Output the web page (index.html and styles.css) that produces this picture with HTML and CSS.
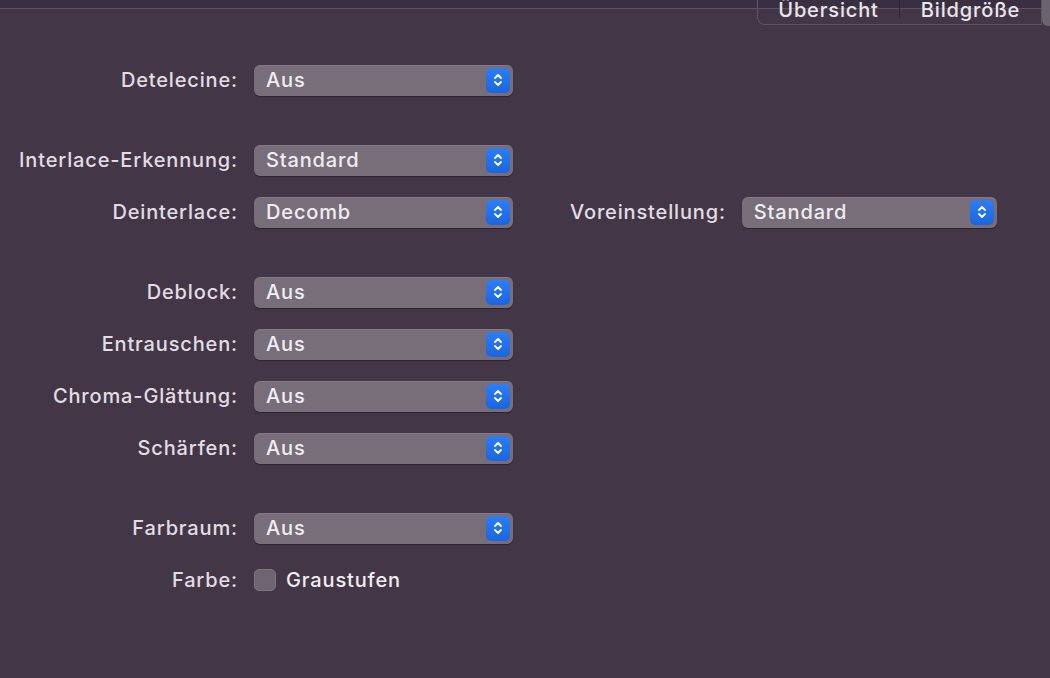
FILE: index.html
```html
<!DOCTYPE html>
<html lang="de">
<head>
    <meta charset="UTF-8">
    <title>Filter</title>
    <link rel="stylesheet" href="styles.css">
</head>
<body>
    <div class="topstrip"></div>
    <div class="tabbar">
        <div class="tabs">
            <span class="tab">Übersicht</span>
            <span class="tab-sep"></span>
            <span class="tab">Bildgröße</span>
        </div>
        <div class="tab-selected"></div>
    </div>

    <div class="form">
        <div class="group">
            <div class="row">
                <label class="lbl">Detelecine:</label>
                <div class="popup"><span>Aus</span><span class="arrows"><svg viewBox="0 0 10 14" width="10" height="14"><path d="M2 5 L5 2 L8 5 M2 9 L5 12 L8 9" fill="none" stroke="#fff" stroke-width="1.8" stroke-linecap="round" stroke-linejoin="round"/></svg></span></div>
            </div>
        </div>

        <div class="group">
            <div class="row">
                <label class="lbl">Interlace-Erkennung:</label>
                <div class="popup"><span>Standard</span><span class="arrows"><svg viewBox="0 0 10 14" width="10" height="14"><path d="M2 5 L5 2 L8 5 M2 9 L5 12 L8 9" fill="none" stroke="#fff" stroke-width="1.8" stroke-linecap="round" stroke-linejoin="round"/></svg></span></div>
            </div>
            <div class="row">
                <label class="lbl">Deinterlace:</label>
                <div class="popup"><span>Decomb</span><span class="arrows"><svg viewBox="0 0 10 14" width="10" height="14"><path d="M2 5 L5 2 L8 5 M2 9 L5 12 L8 9" fill="none" stroke="#fff" stroke-width="1.8" stroke-linecap="round" stroke-linejoin="round"/></svg></span></div>
                <label class="lbl lbl-side">Voreinstellung:</label>
                <div class="popup popup-wide"><span>Standard</span><span class="arrows"><svg viewBox="0 0 10 14" width="10" height="14"><path d="M2 5 L5 2 L8 5 M2 9 L5 12 L8 9" fill="none" stroke="#fff" stroke-width="1.8" stroke-linecap="round" stroke-linejoin="round"/></svg></span></div>
            </div>
        </div>

        <div class="group">
            <div class="row">
                <label class="lbl">Deblock:</label>
                <div class="popup"><span>Aus</span><span class="arrows"><svg viewBox="0 0 10 14" width="10" height="14"><path d="M2 5 L5 2 L8 5 M2 9 L5 12 L8 9" fill="none" stroke="#fff" stroke-width="1.8" stroke-linecap="round" stroke-linejoin="round"/></svg></span></div>
            </div>
            <div class="row">
                <label class="lbl">Entrauschen:</label>
                <div class="popup"><span>Aus</span><span class="arrows"><svg viewBox="0 0 10 14" width="10" height="14"><path d="M2 5 L5 2 L8 5 M2 9 L5 12 L8 9" fill="none" stroke="#fff" stroke-width="1.8" stroke-linecap="round" stroke-linejoin="round"/></svg></span></div>
            </div>
            <div class="row">
                <label class="lbl">Chroma-Glättung:</label>
                <div class="popup"><span>Aus</span><span class="arrows"><svg viewBox="0 0 10 14" width="10" height="14"><path d="M2 5 L5 2 L8 5 M2 9 L5 12 L8 9" fill="none" stroke="#fff" stroke-width="1.8" stroke-linecap="round" stroke-linejoin="round"/></svg></span></div>
            </div>
            <div class="row">
                <label class="lbl">Schärfen:</label>
                <div class="popup"><span>Aus</span><span class="arrows"><svg viewBox="0 0 10 14" width="10" height="14"><path d="M2 5 L5 2 L8 5 M2 9 L5 12 L8 9" fill="none" stroke="#fff" stroke-width="1.8" stroke-linecap="round" stroke-linejoin="round"/></svg></span></div>
            </div>
        </div>

        <div class="group">
            <div class="row">
                <label class="lbl">Farbraum:</label>
                <div class="popup"><span>Aus</span><span class="arrows"><svg viewBox="0 0 10 14" width="10" height="14"><path d="M2 5 L5 2 L8 5 M2 9 L5 12 L8 9" fill="none" stroke="#fff" stroke-width="1.8" stroke-linecap="round" stroke-linejoin="round"/></svg></span></div>
            </div>
            <div class="row">
                <label class="lbl">Farbe:</label>
                <div class="check"><span class="box"></span><span>Graustufen</span></div>
            </div>
        </div>
    </div>
</body>
</html>
```

FILE: styles.css
```css
html, body {
    margin: 0;
    padding: 0;
}
body {
    width: 1050px;
    height: 678px;
    overflow: hidden;
    background-color: #433747;
    font-family: Inter, "Noto Sans", sans-serif;
    font-size: 20px;
    font-weight: 500;
    letter-spacing: 0.85px;
    color: #e4dfe6;
}
.topstrip {
    height: 8px;
    background-color: #3a2f40;
    border-bottom: 1px solid #5b5160;
}
.tabbar {
    display: flex;
    justify-content: flex-end;
    height: 26px;
    margin-top: -9px;
}
.tabs {
    display: flex;
    align-items: flex-start;
    height: 24px;
    border: 1px solid #5d5362;
    border-top: none;
    border-bottom-left-radius: 8px;
}
.tab {
    width: 141px;
    text-align: center;
    line-height: 21px;
    color: #ebe6ed;
}
.tab-sep {
    width: 1px;
    height: 18px;
    background-color: #2f2634;
}
.tab-selected {
    width: 8px;
    height: 26px;
    background-color: #6c6370;
    border-bottom-left-radius: 6px;
}
.form {
    padding-top: 38px;
}
.group {
    display: flex;
    flex-direction: column;
    gap: 20px;
    margin-bottom: 48px;
}
.row {
    display: flex;
    align-items: center;
    height: 32px;
}
.lbl {
    width: 238px;
    text-align: right;
    margin-right: 16px;
    color: #e2dde4;
}
.lbl.lbl-side {
    width: auto;
    margin-left: 57px;
}
.popup {
    display: flex;
    align-items: center;
    justify-content: space-between;
    width: 259px;
    height: 31px;
    box-sizing: border-box;
    padding: 0 3px 0 12px;
    background-color: #776e7a;
    border-radius: 6px;
    box-shadow: 0 1px 1px rgba(0, 0, 0, 0.35), inset 0 1px 0 rgba(255, 255, 255, 0.08);
    color: #f1edf2;
}
.popup-wide {
    width: 255px;
}
.arrows {
    display: flex;
    align-items: center;
    justify-content: center;
    width: 24px;
    height: 25px;
    border-radius: 5px;
    background: linear-gradient(#2e7df5, #1a66e0);
}
.check {
    display: flex;
    align-items: center;
    gap: 10px;
    color: #f1edf2;
}
.box {
    width: 22px;
    height: 22px;
    box-sizing: border-box;
    border-radius: 5px;
    background-color: #6e6572;
    border: 1px solid #7d7481;
}
```
